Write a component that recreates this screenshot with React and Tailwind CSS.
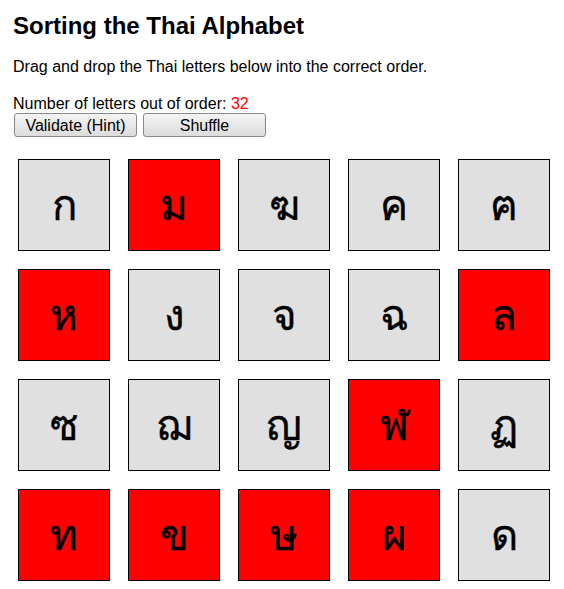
const letters = [
  { ch: 'ก', bad: false },
  { ch: 'ม', bad: true },
  { ch: 'ฆ', bad: false },
  { ch: 'ค', bad: false },
  { ch: 'ฅ', bad: false },
  { ch: 'ห', bad: true },
  { ch: 'ง', bad: false },
  { ch: 'จ', bad: false },
  { ch: 'ฉ', bad: false },
  { ch: 'ล', bad: true },
  { ch: 'ซ', bad: false },
  { ch: 'ฌ', bad: false },
  { ch: 'ญ', bad: false },
  { ch: 'ฬ', bad: true },
  { ch: 'ฏ', bad: false },
  { ch: 'ท', bad: true },
  { ch: 'ข', bad: true },
  { ch: 'ษ', bad: true },
  { ch: 'ผ', bad: true },
  { ch: 'ด', bad: false },
];

export default function App() {
  return (
    <div className="font-['Liberation_Sans',Arial,sans-serif] text-black bg-white min-h-[589px] px-[13px] pt-[12px]">
      <h1 className="text-[24px] font-bold leading-[28px]">Sorting the Thai Alphabet</h1>
      <p className="text-[16px] mt-[17px] leading-[19px]">
        Drag and drop the Thai letters below into the correct order.
      </p>
      <p className="text-[16px] mt-[18px] leading-[19px]">
        Number of letters out of order: <span className="text-[#ff0000]">32</span>
      </p>
      <div className="flex gap-[6px] ml-[1px]">
        <button className="w-[123px] h-[24px] text-[16px] leading-none pt-[1px] border border-[#8a8a8a] rounded-[3px] bg-gradient-to-b from-[#f4f4f4] to-[#dcdcdc]">
          Validate (Hint)
        </button>
        <button className="w-[123px] h-[24px] text-[16px] leading-none pt-[1px] border border-[#8a8a8a] rounded-[3px] bg-gradient-to-b from-[#f4f4f4] to-[#dcdcdc]">
          Shuffle
        </button>
      </div>
      <div className="grid grid-cols-[repeat(5,92px)] gap-[18px] ml-[5px] mt-[22px]">
        {letters.map((l, i) => (
          <div
            key={i}
            className={`w-[92px] h-[92px] border border-black flex items-center justify-center text-[42px] [-webkit-text-stroke:0.4px_black] ${
              l.bad ? 'bg-[#ff0000]' : 'bg-[#e0e0e0]'
            }`}
          >
            {l.ch}
          </div>
        ))}
      </div>
    </div>
  );
}
